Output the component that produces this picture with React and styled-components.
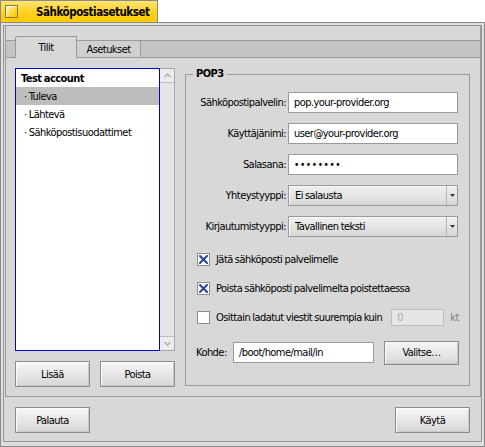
import React from "react";
import styled, { createGlobalStyle } from "styled-components";

const GlobalStyle = createGlobalStyle`
  html, body {
    margin: 0;
    padding: 0;
    background: #ffffff;
  }
  body {
    font-family: "DejaVu Sans Condensed", "Liberation Sans", sans-serif;
    font-size: 11px;
    letter-spacing: -0.55px;
    word-spacing: -0.5px;
    color: #000;
  }
  * {
    box-sizing: border-box;
  }
`;

const Screen = styled.div`
  width: 485px;
  height: 447px;
  display: flex;
  flex-direction: column;
`;

const TitleTab = styled.div`
  width: 158px;
  height: 22px;
  flex: none;
  display: flex;
  align-items: center;
  padding-left: 4px;
  border: 1px solid #8a8a8a;
  border-bottom: none;
  background: linear-gradient(#ffe471, #ffcf1a 60%, #ffcb00);
`;

const CloseBox = styled.div`
  width: 13px;
  height: 13px;
  border: 1px solid #8a7a3a;
  background: linear-gradient(135deg, #fff8d0, #ffd83a 55%, #f2be00);
  box-shadow: inset 1px 1px 0 #fffbe6;
`;

const Title = styled.span`
  margin-left: 18px;
  font-size: 11.5px;
  letter-spacing: -0.45px;
  font-weight: bold;
  white-space: nowrap;
`;

const Window = styled.div`
  flex: 1;
  border: 1px solid #8a8a8a;
  padding: 2px 2px 4px 2px;
  background: #dedede;
`;

const Inner = styled.div`
  height: 100%;
  border: 1px solid #979797;
  background: #d8d8d8;
  padding-left: 1px;
  display: flex;
  flex-direction: column;
`;

const TabView = styled.div`
  height: 371px;
  flex: none;
  display: flex;
  flex-direction: column;
  border: 1px solid #9a9a9a;
  border-top: none;
`;

const TabStrip = styled.div`
  height: 32px;
  flex: none;
  display: flex;
  align-items: flex-end;
  padding-left: 9px;
  border-bottom: 1px solid #999;
  background: linear-gradient(
    to bottom,
    #d8d8d8 0 14px,
    #9a9a9a 14px 15px,
    #c4c4c4 15px
  );
`;

const Tab = styled.div`
  display: flex;
  align-items: center;
  justify-content: center;
  position: relative;
  ${(p) =>
    p.$active
      ? `
    width: 62px;
    height: 22px;
    margin-bottom: -1px;
    z-index: 1;
    background: #d8d8d8;
    border: 1px solid #999;
    border-bottom: none;
    border-top-left-radius: 3px;
    padding-bottom: 1px;
  `
      : `
    width: 64px;
    height: 16px;
    background: #d0d0d0;
    border-right: 1px solid #999;
  `}
`;

const TabBody = styled.div`
  flex: 1;
  display: flex;
  gap: 10px;
  padding: 10px 10px 9px 9px;
`;

const LeftCol = styled.div`
  width: 160px;
  flex: none;
  display: flex;
  flex-direction: column;
  gap: 10px;
`;

const ListBox = styled.div`
  flex: 1;
  display: flex;
`;

const List = styled.div`
  width: 145px;
  border: 1px solid #0000dc;
  background: #fff;
`;

const ListRow = styled.div`
  height: 18px;
  display: flex;
  align-items: center;
  padding-left: ${(p) => (p.$sub ? 8 : 5)}px;
  font-weight: ${(p) => (p.$bold ? "bold" : "normal")};
  background: ${(p) => (p.$selected ? "#bdbdbd" : "transparent")};
  white-space: pre;
`;

const ScrollBar = styled.div`
  width: 15px;
  display: flex;
  flex-direction: column;
  justify-content: space-between;
  border: 1px solid #a8a8a8;
  border-left: none;
  background: #e6e6e6;
`;

const ScrollArrow = styled.div`
  height: 14px;
  display: flex;
  align-items: center;
  justify-content: center;
  background: #ececec;
  ${(p) => (p.$down ? "border-top" : "border-bottom")}: 1px solid #bdbdbd;
`;

const ButtonRow = styled.div`
  display: flex;
  justify-content: space-between;
`;

const Button = styled.button`
  width: ${(p) => p.$w || 75}px;
  height: ${(p) => p.$h || 26}px;
  flex: none;
  padding: 0;
  font: inherit;
  letter-spacing: inherit;
  word-spacing: inherit;
  color: #000;
  border: 1px solid #8c8c8c;
  border-radius: 0;
  background: linear-gradient(#f6f6f6, #e4e4e4 60%, #d6d6d6);
  box-shadow: inset 1px 1px 0 #fbfbfb, inset -1px -1px 0 #c8c8c8;
`;

const GroupBox = styled.fieldset`
  flex: 1;
  min-width: 0;
  margin: 0 0 1px 0;
  padding: 0;
  border: 1px solid #9a9a9a;
`;

const Legend = styled.legend`
  margin-left: 7px;
  padding: 0 3px;
  line-height: 12px;
  font-weight: bold;
`;

const Form = styled.div`
  display: flex;
  flex-direction: column;
  padding-top: 12px;
`;

const FieldGroup = styled.div`
  display: flex;
  flex-direction: column;
  gap: 10px;
  margin-bottom: 8px;
`;

const FieldRow = styled.div`
  display: grid;
  grid-template-columns: 100px 170px;
  column-gap: 2px;
  align-items: center;
  height: 21px;
`;

const Label = styled.span`
  text-align: right;
  white-space: nowrap;
`;

const TextInput = styled.div`
  height: ${(p) => p.$h || 21}px;
  width: ${(p) => (p.$w ? `${p.$w}px` : "auto")};
  display: flex;
  align-items: center;
  padding-left: 5px;
  border: 1px solid ${(p) => (p.$disabled ? "#bdbdbd" : "#9a9a9a")};
  background: ${(p) => (p.$disabled ? "#e6e6e6" : "#fff")};
  color: ${(p) => (p.$disabled ? "#ababab" : "#000")};
  white-space: nowrap;
  overflow: hidden;
`;

const Dots = styled.span`
  font-size: 10px;
  letter-spacing: 0.6px;
`;

const MenuField = styled.div`
  height: 21px;
  display: flex;
  border: 1px solid #9a9a9a;
  background: linear-gradient(#efefef, #e2e2e2 60%, #d6d6d6);
  box-shadow: inset 1px 1px 0 #f8f8f8;
`;

const MenuText = styled.span`
  flex: 1;
  display: flex;
  align-items: center;
  padding-left: 6px;
  white-space: nowrap;
`;

const MenuArrow = styled.span`
  width: 11px;
  display: flex;
  align-items: center;
  justify-content: center;
  border-left: 1px solid #b4b4b4;
`;

const CheckRow = styled.div`
  height: 29px;
  display: flex;
  align-items: center;
  padding-left: 11px;
  white-space: nowrap;
`;

const CheckBox = styled.span`
  width: 13px;
  height: 13px;
  flex: none;
  display: flex;
  align-items: center;
  justify-content: center;
  margin-right: 6px;
  border: 1px solid #8c8c8c;
  background: #fff;
`;

const Unit = styled.span`
  margin-left: 6px;
  color: #7d7d7d;
`;

const KohdeRow = styled.div`
  height: 25px;
  margin-top: 8px;
  display: flex;
  align-items: center;
  padding-left: 10px;
`;

const KohdeLabel = styled.span`
  width: 37px;
  flex: none;
`;

const BottomBar = styled.div`
  flex: 1;
  display: flex;
  justify-content: space-between;
  align-items: flex-start;
  padding: 10px 11px 0 10px;
`;

const Chevron = ({ down }) => (
  <svg width="7" height="5" viewBox="0 0 7 5">
    <path
      d={down ? "M0.5 1 L3.5 4 L6.5 1" : "M0.5 4 L3.5 1 L6.5 4"}
      fill="none"
      stroke="#ababab"
      strokeWidth="1.3"
    />
  </svg>
);

const Cross = () => (
  <svg width="9" height="9" viewBox="0 0 9 9">
    <path d="M1 1 L8 8 M8 1 L1 8" stroke="#22449e" strokeWidth="2" strokeLinecap="square" />
  </svg>
);

const DownTri = () => (
  <svg width="5" height="3" viewBox="0 0 5 3">
    <path d="M0 0 H5 L2.5 3 Z" fill="#333" />
  </svg>
);

const Check = ({ checked, children }) => (
  <>
    <CheckBox>{checked && <Cross />}</CheckBox>
    {children}
  </>
);

export default function App() {
  return (
    <>
      <GlobalStyle />
      <Screen>
        <TitleTab>
          <CloseBox />
          <Title>Sähköpostiasetukset</Title>
        </TitleTab>
        <Window>
          <Inner>
            <TabView>
              <TabStrip>
                <Tab $active>Tilit</Tab>
                <Tab>Asetukset</Tab>
              </TabStrip>
              <TabBody>
                <LeftCol>
                  <ListBox>
                    <List>
                      <ListRow $bold>Test account</ListRow>
                      <ListRow $sub $selected>· Tuleva</ListRow>
                      <ListRow $sub>· Lähtevä</ListRow>
                      <ListRow $sub>· Sähköpostisuodattimet</ListRow>
                    </List>
                    <ScrollBar>
                      <ScrollArrow>
                        <Chevron />
                      </ScrollArrow>
                      <ScrollArrow $down>
                        <Chevron down />
                      </ScrollArrow>
                    </ScrollBar>
                  </ListBox>
                  <ButtonRow>
                    <Button>Lisää</Button>
                    <Button>Poista</Button>
                  </ButtonRow>
                </LeftCol>

                <GroupBox>
                  <Legend>POP3</Legend>
                  <Form>
                    <FieldGroup>
                      <FieldRow>
                        <Label>Sähköpostipalvelin:</Label>
                        <TextInput>pop.your-provider.org</TextInput>
                      </FieldRow>
                      <FieldRow>
                        <Label>Käyttäjänimi:</Label>
                        <TextInput>user@your-provider.org</TextInput>
                      </FieldRow>
                      <FieldRow>
                        <Label>Salasana:</Label>
                        <TextInput>
                          <Dots>••••••••</Dots>
                        </TextInput>
                      </FieldRow>
                      <FieldRow>
                        <Label>Yhteystyyppi:</Label>
                        <MenuField>
                          <MenuText>Ei salausta</MenuText>
                          <MenuArrow>
                            <DownTri />
                          </MenuArrow>
                        </MenuField>
                      </FieldRow>
                      <FieldRow>
                        <Label>Kirjautumistyyppi:</Label>
                        <MenuField>
                          <MenuText>Tavallinen teksti</MenuText>
                          <MenuArrow>
                            <DownTri />
                          </MenuArrow>
                        </MenuField>
                      </FieldRow>
                    </FieldGroup>

                    <CheckRow>
                      <Check checked>Jätä sähköposti palvelimelle</Check>
                    </CheckRow>
                    <CheckRow>
                      <Check checked>Poista sähköposti palvelimelta poistettaessa</Check>
                    </CheckRow>
                    <CheckRow>
                      <Check>Osittain ladatut viestit suurempia kuin</Check>
                      <TextInput $w={53} $h={17} $disabled style={{ marginLeft: 9 }}>
                        0
                      </TextInput>
                      <Unit>kt</Unit>
                    </CheckRow>

                    <KohdeRow>
                      <KohdeLabel>Kohde:</KohdeLabel>
                      <TextInput $w={141}>/boot/home/mail/in</TextInput>
                      <Button $h={24} style={{ marginLeft: 10 }}>
                        Valitse…
                      </Button>
                    </KohdeRow>
                  </Form>
                </GroupBox>
              </TabBody>
            </TabView>
            <BottomBar>
              <Button>Palauta</Button>
              <Button>Käytä</Button>
            </BottomBar>
          </Inner>
        </Window>
      </Screen>
    </>
  );
}
